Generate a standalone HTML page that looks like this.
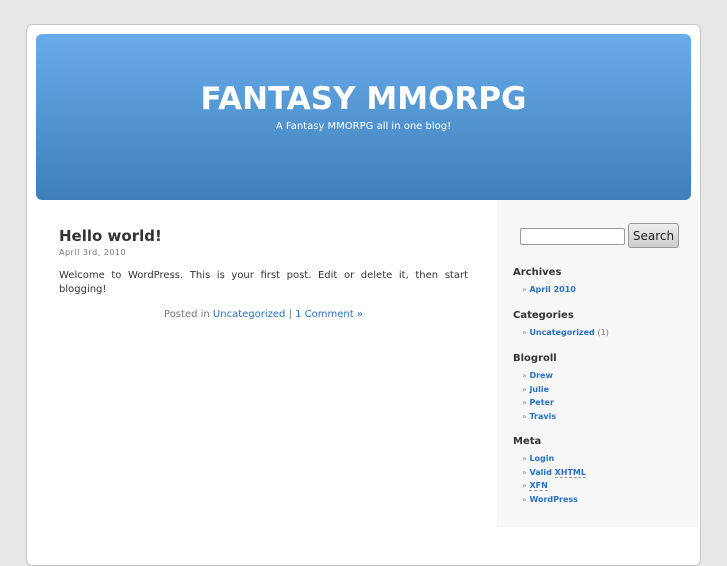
<!DOCTYPE html>
<html><head><style>
body{margin:0;background:#e7e7e7;font-family:"DejaVu Sans","Liberation Sans",sans-serif;width:727px;height:545px;overflow:hidden;position:relative}
#page{position:absolute;left:26px;top:24px;width:673px;height:540px;background:#fff;border:1px solid #c4c4c4;border-radius:6px}
#header{position:absolute;left:36px;top:34px;width:655px;height:166px;border-radius:6px;background:linear-gradient(#69acea,#3e7fb9)}
h1{position:absolute;left:0;width:100%;top:45px;margin:0;text-align:center;color:#fff;font-size:31px;font-weight:bold;line-height:40px}
.desc{position:absolute;left:0;width:100%;top:87px;text-align:center;color:#fff;font-size:10px}
#sidebar{position:absolute;left:497px;top:200px;width:202px;height:327px;background:#f7f7f7}
a{color:#2970c4;text-decoration:none}
.post{position:absolute;left:59px;top:227px;width:409px;color:#333}
.post h2{margin:0;font-size:15px;font-weight:bold;color:#333}
.date{font-size:8px;color:#777;margin-top:3px;letter-spacing:.5px}
.entry{font-size:10px;line-height:14px;text-align:justify;margin-top:12px;color:#333}
.meta{text-align:center;font-size:10px;color:#777;margin-top:12px}
#sidebar h3{font-size:10px;font-weight:bold;color:#333;margin:0;position:absolute;left:16px}
#sidebar ul{list-style:none;margin:0;padding:0;position:absolute;left:25px;font-size:8px;font-weight:bold}
#sidebar li{height:13.6px}
#sidebar li:before{content:"» ";color:#999;font-weight:normal}
.cnt{color:#777;font-weight:normal}
input{position:absolute;left:520px;top:228px;width:103px;height:15px;border:1px solid #999;border-radius:2px;background:#fff;margin:0;padding:0}
button{position:absolute;left:628px;top:223px;width:51px;height:25px;border:1px solid #999;border-radius:3px;background:linear-gradient(#eee,#ccc);font-family:"DejaVu Sans",sans-serif;font-size:12px;color:#222;padding:0}
abbr{border-bottom:1px dashed #999}
</style></head><body>
<div id="page"></div>
<div id="header"><h1>FANTASY MMORPG</h1><div class="desc">A Fantasy MMORPG all in one blog!</div></div>
<div id="sidebar">
<h3 style="top:67px">Archives</h3>
<ul style="top:85px"><li><a>April 2010</a></li></ul>
<h3 style="top:110px">Categories</h3>
<ul style="top:128px"><li><a>Uncategorized</a> <span class="cnt">(1)</span></li></ul>
<h3 style="top:153px">Blogroll</h3>
<ul style="top:171px"><li><a>Drew</a></li><li><a>Julie</a></li><li><a>Peter</a></li><li><a>Travis</a></li></ul>
<h3 style="top:236px">Meta</h3>
<ul style="top:254px"><li><a>Login</a></li><li><a>Valid <abbr>XHTML</abbr></a></li><li><a><abbr>XFN</abbr></a></li><li><a>WordPress</a></li></ul>
</div>
<input type="text"><button>Search</button>
<div class="post"><h2>Hello world!</h2><div class="date">April 3rd, 2010</div>
<div class="entry">Welcome to WordPress. This is your first post. Edit or delete it, then start blogging!</div>
<div class="meta">Posted in <a>Uncategorized</a> | <a>1 Comment »</a></div></div>
</body></html>
